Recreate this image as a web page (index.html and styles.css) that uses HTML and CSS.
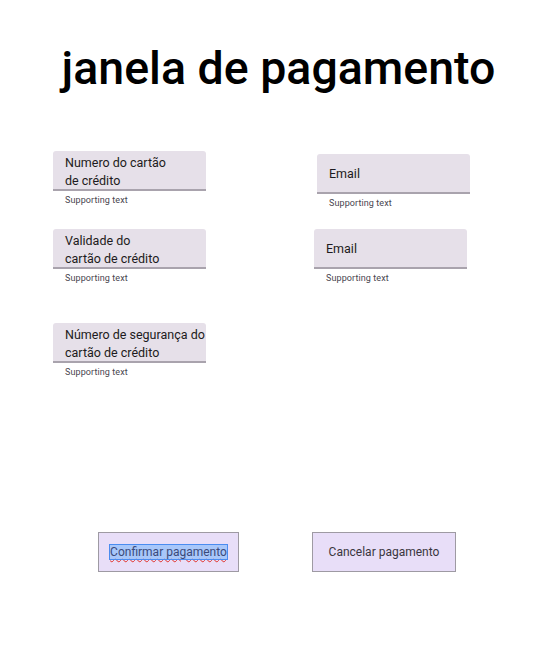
FILE: index.html
```html
<!DOCTYPE html>
<html lang="pt">
<head>
    <meta charset="UTF-8">
    <meta name="viewport" content="width=device-width, initial-scale=1.0">
    <title>Janela de pagamento</title>
    <link rel="stylesheet" href="styles.css">
</head>
<body>
    <div class="payment-window">
        <h1 class="payment-title">janela de pagamento</h1>

        <div class="payment-form">
            <div class="form-column form-column-left">
                <div class="field field-card">
                    <div class="field-box">Numero do cartão<br>de crédito</div>
                    <div class="field-support">Supporting text</div>
                </div>
                <div class="field field-validity">
                    <div class="field-box">Validade do<br>cartão de crédito</div>
                    <div class="field-support">Supporting text</div>
                </div>
                <div class="field field-security">
                    <div class="field-box">Número de segurança do<br>cartão de crédito</div>
                    <div class="field-support">Supporting text</div>
                </div>
            </div>

            <div class="form-column form-column-right">
                <div class="field field-email">
                    <div class="field-box field-box-single">Email</div>
                    <div class="field-support">Supporting text</div>
                </div>
                <div class="field field-email-confirm">
                    <div class="field-box field-box-single">Email</div>
                    <div class="field-support">Supporting text</div>
                </div>
            </div>
        </div>

        <div class="payment-actions">
            <button class="btn btn-confirm"><span class="btn-selected">Confirmar pagamento</span></button>
            <button class="btn btn-cancel">Cancelar pagamento</button>
        </div>
    </div>
</body>
</html>
```

FILE: styles.css
```css
* {
    margin: 0;
    padding: 0;
    box-sizing: border-box;
}

body {
    font-family: Roboto, 'Noto Sans', sans-serif;
    background: #ffffff;
    color: #1d1b20;
}

.payment-window {
    width: 557px;
    height: 652px;
    padding-top: 40px;
    overflow: hidden;
}

.payment-title {
    text-align: center;
    font-size: 46.5px;
    line-height: 56px;
    font-weight: 500;
    color: #000000;
}

.payment-form {
    display: flex;
    margin-top: 55px;
}

.form-column {
    display: flex;
    flex-direction: column;
}

.form-column-left {
    margin-left: 53px;
}

.form-column-right {
    margin-left: 111px;
}

.field-box {
    width: 153px;
    height: 40px;
    padding: 3px 0 0 12px;
    background: #e6e0e9;
    border-bottom: 2px solid #a9a3ad;
    border-radius: 3px 3px 0 0;
    font-size: 12.5px;
    line-height: 18px;
    color: #1d1b20;
    white-space: nowrap;
}

.field-box-single {
    padding-top: 11px;
}

.field-support {
    padding: 4px 0 0 12px;
    font-size: 9px;
    line-height: 11px;
    letter-spacing: 0.1px;
    color: #49454f;
}

.field-validity {
    margin-top: 23px;
}

.field-security {
    margin-top: 39px;
}

.field-email {
    margin-top: 3px;
}

.field-email-confirm {
    margin-top: 20px;
    margin-left: -3px;
}

.payment-actions {
    display: flex;
    margin-top: 154px;
}

.btn {
    height: 40px;
    background: #e8def8;
    border: 1px solid #9e9aa3;
    font-family: Roboto, 'Noto Sans', sans-serif;
    font-size: 12px;
    color: #1d1b20;
    cursor: pointer;
}

.btn-confirm {
    width: 141px;
    margin-left: 98px;
}

.btn-cancel {
    width: 144px;
    margin-left: 73px;
    color: #3a3640;
}

.btn-selected {
    background: #a8c7fa;
    outline: 1px solid #4a8cf0;
    color: #3b4a7a;
    text-decoration: underline wavy #e0302a;
    text-decoration-thickness: 1px;
    text-underline-offset: 2px;
}
```
